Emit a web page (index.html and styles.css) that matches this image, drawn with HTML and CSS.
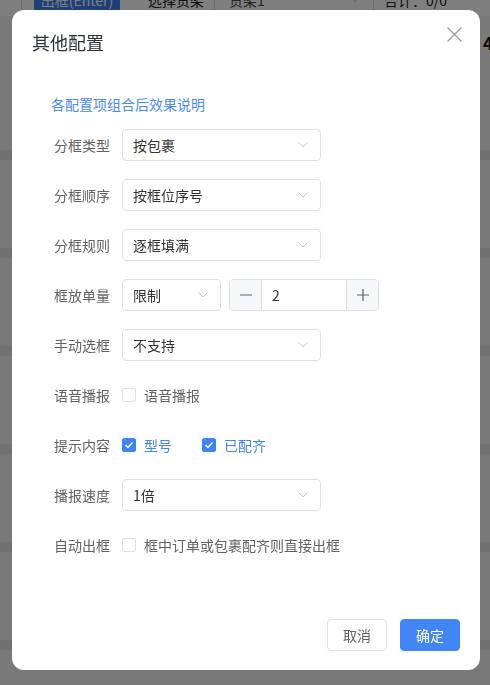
FILE: index.html
```html
<!DOCTYPE html>
<html lang="zh-CN">
<head>
<meta charset="utf-8">
<title>其他配置</title>
<link rel="stylesheet" href="styles.css">
</head>
<body>
<div class="page">
  <div class="toolbar">
    <span class="tb-edge"></span>
    <span class="tb-btn">出框(Enter)</span>
    <span class="tb-label">选择货架</span>
    <span class="tb-select">货架1<svg class="chev" width="10" height="6" viewBox="0 0 10 6"><polyline points="0.5,0.5 5,5 9.5,0.5" fill="none" stroke="#c0c4cc" stroke-width="1"/></svg></span>
    <span class="tb-total">合计：0/0</span>
  </div>
  <div class="summary"><span class="summary-num">4</span></div>
  <div class="rows">
    <div class="bg-row"></div>
    <div class="bg-row"></div>
    <div class="bg-row"></div>
    <div class="bg-row"></div>
    <div class="bg-row"></div>
    <div class="bg-row"></div>
  </div>
</div>
<div class="mask"></div>
<div class="dialog">
  <div class="dialog-header">
    <span class="dialog-title">其他配置</span>
    <span class="dialog-close"><svg width="15" height="15" viewBox="0 0 15 15"><path d="M0.5 0.5 L14.5 14.5 M14.5 0.5 L0.5 14.5" stroke="#9a9ca3" stroke-width="1.3" fill="none"/></svg></span>
  </div>
  <div class="dialog-body">
    <a class="help-link">各配置项组合后效果说明</a>
    <div class="form">
      <div class="form-row">
        <label class="form-label">分框类型</label>
        <div class="select"><span>按包裹</span><svg class="chev" width="10" height="6" viewBox="0 0 10 6"><polyline points="0.5,0.5 5,5 9.5,0.5" fill="none" stroke="#c0c4cc" stroke-width="1"/></svg></div>
      </div>
      <div class="form-row">
        <label class="form-label">分框顺序</label>
        <div class="select"><span>按框位序号</span><svg class="chev" width="10" height="6" viewBox="0 0 10 6"><polyline points="0.5,0.5 5,5 9.5,0.5" fill="none" stroke="#c0c4cc" stroke-width="1"/></svg></div>
      </div>
      <div class="form-row">
        <label class="form-label">分框规则</label>
        <div class="select"><span>逐框填满</span><svg class="chev" width="10" height="6" viewBox="0 0 10 6"><polyline points="0.5,0.5 5,5 9.5,0.5" fill="none" stroke="#c0c4cc" stroke-width="1"/></svg></div>
      </div>
      <div class="form-row">
        <label class="form-label">框放单量</label>
        <div class="select select-sm"><span>限制</span><svg class="chev" width="10" height="6" viewBox="0 0 10 6"><polyline points="0.5,0.5 5,5 9.5,0.5" fill="none" stroke="#c0c4cc" stroke-width="1"/></svg></div>
        <div class="number">
          <span class="num-btn num-minus"><svg width="12" height="12" viewBox="0 0 12 12"><path d="M0 6 H12" stroke="#606266" stroke-width="1.2"/></svg></span>
          <span class="num-value">2</span>
          <span class="num-btn num-plus"><svg width="12" height="12" viewBox="0 0 12 12"><path d="M0 6 H12 M6 0 V12" stroke="#606266" stroke-width="1.2"/></svg></span>
        </div>
      </div>
      <div class="form-row">
        <label class="form-label">手动选框</label>
        <div class="select"><span>不支持</span><svg class="chev" width="10" height="6" viewBox="0 0 10 6"><polyline points="0.5,0.5 5,5 9.5,0.5" fill="none" stroke="#c0c4cc" stroke-width="1"/></svg></div>
      </div>
      <div class="form-row">
        <label class="form-label">语音播报</label>
        <span class="checkbox"><span class="box"></span><span class="cb-text">语音播报</span></span>
      </div>
      <div class="form-row">
        <label class="form-label">提示内容</label>
        <span class="checkbox checked"><span class="box"><svg width="10" height="8" viewBox="0 0 10 8"><polyline points="1.5,4 4,6.5 8.5,1.5" fill="none" stroke="#fff" stroke-width="1.3"/></svg></span><span class="cb-text">型号</span></span>
        <span class="checkbox checked cb-second"><span class="box"><svg width="10" height="8" viewBox="0 0 10 8"><polyline points="1.5,4 4,6.5 8.5,1.5" fill="none" stroke="#fff" stroke-width="1.3"/></svg></span><span class="cb-text">已配齐</span></span>
      </div>
      <div class="form-row">
        <label class="form-label">播报速度</label>
        <div class="select"><span>1倍</span><svg class="chev" width="10" height="6" viewBox="0 0 10 6"><polyline points="0.5,0.5 5,5 9.5,0.5" fill="none" stroke="#c0c4cc" stroke-width="1"/></svg></div>
      </div>
      <div class="form-row">
        <label class="form-label">自动出框</label>
        <span class="checkbox"><span class="box"></span><span class="cb-text">框中订单或包裹配齐则直接出框</span></span>
      </div>
    </div>
  </div>
  <div class="dialog-footer">
    <button class="btn btn-default">取消</button>
    <button class="btn btn-primary">确定</button>
  </div>
</div>
</body>
</html>
```

FILE: styles.css
```css
* { box-sizing: border-box; }
html, body { margin: 0; padding: 0; }
body {
  width: 490px;
  height: 685px;
  overflow: hidden;
  background: #f3f3f3;
  font-family: "Noto Sans CJK SC", "Noto Sans", sans-serif;
  font-size: 14px;
  color: #303133;
}

/* background page */
.page { width: 490px; }
.toolbar {
  display: flex;
  align-items: center;
  height: 32px;
  margin-top: -16px;
  background: #fff;
  white-space: nowrap;
}
.tb-edge { width: 22px; height: 32px; border-right: 1px solid #d0d0d0; margin-right: 12px; }
.tb-btn {
  width: 86px; height: 32px; line-height: 32px;
  background: #3f7ef0; color: #fff; text-align: center; font-size: 14px;
}
.tb-label { margin-left: 28px; font-size: 14px; color: #222; }
.tb-select {
  display: flex; align-items: center; justify-content: space-between;
  margin-left: 10px; width: 160px; height: 32px; padding: 0 13px 0 14px;
  border-left: 1px solid #dcdfe6; border-right: 1px solid #dcdfe6; color: #444;
}
.tb-total { margin-left: 10px; color: #222; }
.summary { height: 46px; padding: 17px 0 0 483px; white-space: nowrap; }
.summary-num { font-weight: 700; font-size: 17px; line-height: 20px; color: #111; }
.rows { display: flex; flex-direction: column; }
.bg-row { height: 98px; border-bottom: 10px solid #e2e2e2; }

.mask {
  position: fixed; left: 0; top: 0; right: 0; bottom: 0;
  background: rgba(0, 0, 0, 0.5);
}

/* dialog */
.dialog {
  position: fixed;
  left: 12px; top: 10px;
  width: 468px; height: 660px;
  background: #fff;
  border-radius: 12px;
  display: flex;
  flex-direction: column;
}
.dialog-header { position: relative; padding: 20px 20px 0; height: 44px; }
.dialog-title { font-size: 18px; line-height: 24px; color: #2e3240; display: block; }
.dialog-close { position: absolute; right: 18px; top: 17px; width: 15px; height: 15px; display: flex; }

.dialog-body { padding: 40px 0 0 39px; }
.help-link { display: block; font-size: 14px; line-height: 20px; color: #4a8af5; }
.form { margin-top: 15px; display: flex; flex-direction: column; gap: 18px; }
.form-row { display: flex; align-items: center; height: 32px; }
.form-label {
  width: 71px; padding-right: 12px; text-align: right;
  font-size: 14px; color: #606266; white-space: nowrap;
}
.select {
  width: 199px; height: 32px;
  border: 1px solid #dcdfe6; border-radius: 4px;
  display: flex; align-items: center; justify-content: space-between;
  padding: 0 12px 0 10px;
  color: #333; font-size: 14px;
}
.select-sm { width: 99px; }
.number {
  margin-left: 8px; width: 150px; height: 32px;
  border: 1px solid #dcdfe6; border-radius: 4px;
  display: flex; align-items: center; overflow: hidden;
}
.num-btn {
  width: 32px; height: 100%;
  background: #f5f7fa;
  display: flex; align-items: center; justify-content: center;
}
.num-minus { border-right: 1px solid #dcdfe6; }
.num-plus { border-left: 1px solid #dcdfe6; }
.num-value { flex: 1; padding-left: 10px; color: #333; font-size: 14px; }

.checkbox { display: flex; align-items: center; gap: 8px; color: #606266; font-size: 14px; white-space: nowrap; }
.box {
  width: 14px; height: 14px;
  border: 1px solid #dcdfe6; border-radius: 2px; background: #fff;
  display: flex; align-items: center; justify-content: center;
}
.checked .box { background: #3f84f3; border-color: #3f84f3; }
.checked .cb-text { color: #3f84f3; }
.cb-second { margin-left: 30px; }

.dialog-footer {
  margin-top: auto;
  display: flex; justify-content: flex-end; gap: 13px;
  padding: 0 20px 19px;
}
.btn {
  width: 60px; height: 32px; border-radius: 4px;
  font-family: inherit; font-size: 14px; cursor: pointer; padding: 0;
}
.btn-default { background: #fff; border: 1px solid #dcdfe6; color: #606266; }
.btn-primary { background: #4285f4; border: 1px solid #4285f4; color: #fff; }
```
